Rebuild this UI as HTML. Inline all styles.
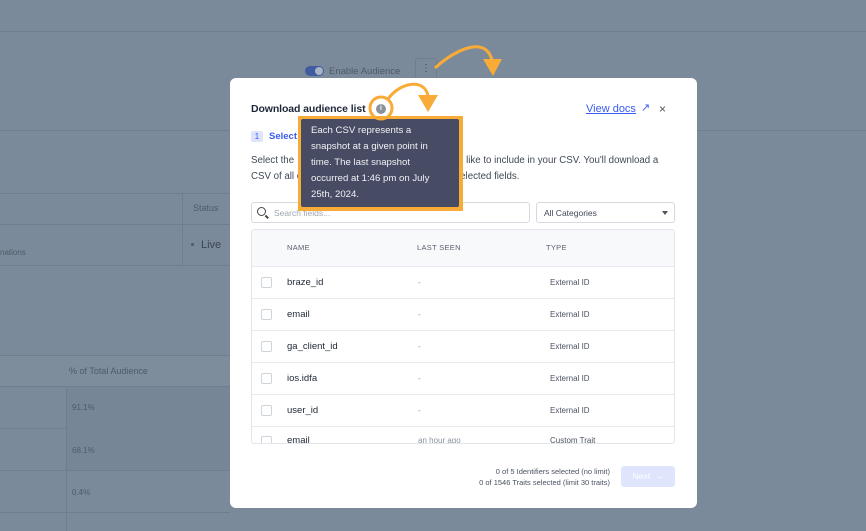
<!DOCTYPE html>
<html><head><meta charset="utf-8"><style>
*{box-sizing:border-box;margin:0;padding:0}
body{width:866px;height:531px;overflow:hidden;background:#7b8a9a;font-family:"Liberation Sans",sans-serif;position:relative}
.a{position:absolute}
.hl{position:absolute;height:1px;background:#6f7e8e}
.vl{position:absolute;width:1px;background:#6f7e8e}
.bgt{position:absolute;font-size:9px;color:#4e5a6a}
.modal{left:230px;top:78px;width:467px;height:430px;background:#fff;border-radius:6px}
.row{position:absolute;left:0;width:423px;height:32px;border-top:1px solid #e6e9ef;font-size:9.5px;color:#222b3a}
.cb{position:absolute;left:9px;top:10px;width:11px;height:11px;border:1px solid #cfd4dc;border-radius:2px}
.n{position:absolute;left:35px;top:10px}
.ls{position:absolute;left:166px;top:11px;color:#8a93a0;font-size:8px}
.ty{position:absolute;left:298px;top:11px;color:#4a5260;font-size:8px}
</style></head><body>
<div class="hl" style="left:0;top:31px;width:866px"></div>
<div class="hl" style="left:0;top:130px;width:866px"></div>
<div class="hl" style="left:0;top:193px;width:230px"></div>
<div class="hl" style="left:0;top:224px;width:230px"></div>
<div class="hl" style="left:0;top:265px;width:230px"></div>
<div class="vl" style="left:182px;top:193px;height:72px"></div>
<div class="bgt" style="left:193px;top:203px">Status</div>
<div class="a" style="left:191px;top:243px;width:3px;height:3px;border-radius:50%;background:#4e5a6a"></div>
<div class="bgt" style="left:201px;top:239px;font-size:11px;color:#3a4555">Live</div>
<div class="bgt" style="left:0;top:248px;font-size:8px">nations</div>
<div class="hl" style="left:0;top:355px;width:230px"></div>
<div class="a" style="left:0;top:356px;width:230px;height:30px;background:#7e8d9c"></div>
<div class="hl" style="left:0;top:386px;width:230px"></div>
<div class="hl" style="left:0;top:428px;width:230px"></div>
<div class="hl" style="left:0;top:470px;width:230px"></div>
<div class="hl" style="left:0;top:512px;width:230px"></div>
<div class="vl" style="left:66px;top:386px;height:145px"></div>
<div class="a" style="left:67px;top:387px;width:163px;height:83px;background:#778697"></div>
<div class="bgt" style="left:69px;top:366px">% of Total Audience</div>
<div class="bgt" style="left:72px;top:403px;font-size:8px">91.1%</div>
<div class="bgt" style="left:72px;top:446px;font-size:8px">68.1%</div>
<div class="bgt" style="left:72px;top:488px;font-size:8px">0.4%</div>
<div class="a" style="left:305px;top:66px;width:19px;height:10px;border-radius:5px;background:#3f5c9e"></div>
<div class="a" style="left:315px;top:67px;width:8px;height:8px;border-radius:50%;background:#a8b4c6"></div>
<div class="bgt" style="left:329px;top:66px;font-size:9.5px">Enable Audience</div>
<div class="a" style="left:415px;top:58px;width:22px;height:22px;border:1px solid #6f7e8e;border-radius:3px;color:#3a4555;font-size:10px;text-align:center;line-height:20px">⋮</div>

<div class="a modal">
  <div class="a" style="left:21px;top:25px;font-size:10.5px;font-weight:bold;color:#1e2638;letter-spacing:-0.1px">Download audience list</div>
  <div class="a" style="left:146px;top:26px;width:10px;height:10px;border-radius:50%;background:#8b919c;color:#fff;font-size:7px;text-align:center;line-height:10px;font-weight:bold">i</div>
  <div class="a" style="left:356px;top:25px;font-size:11px;color:#3a5bf0;text-decoration:underline">View docs</div>
  <div class="a" style="left:411px;top:23px;font-size:11px;color:#3a5bf0">↗</div>
  <div class="a" style="left:429px;top:24px;font-size:12px;color:#555">×</div>
  <div class="a" style="left:21px;top:53px;width:12px;height:11px;background:#dde4fb;border-radius:2px;font-size:8px;color:#3a5bf0;text-align:center;line-height:11px">1</div>
  <div class="a" style="left:39px;top:53px;font-size:9.5px;color:#3a5bf0;font-weight:bold">Select</div>
  <div class="a" style="left:21px;top:75px;font-size:9.7px;line-height:16px;color:#404858;white-space:nowrap">Select the <span style="display:inline-block;width:154px"></span>u'd like to include in your CSV. You'll download a<br>CSV of all e<span style="display:inline-block;width:158px"></span>elected fields.</div>
  <div class="a" style="left:21px;top:124px;width:279px;height:21px;border:1px solid #d5d9e0;border-radius:3px;background:#fff"></div>
  <div class="a" style="left:27px;top:129px;width:9px;height:9px;border:1.5px solid #444;border-radius:50%"></div>
  <div class="a" style="left:35px;top:138px;width:4px;height:1.5px;background:#444;transform:rotate(45deg)"></div>
  <div class="a" style="left:44px;top:130px;font-size:8.5px;color:#a0a7b2">Search fields...</div>
  <div class="a" style="left:306px;top:124px;width:139px;height:21px;border:1px solid #d5d9e0;border-radius:3px;font-size:8.5px;color:#404858;padding:5px 0 0 7px">All Categories</div>
  <div class="a" style="left:432px;top:133px;border:3px solid transparent;border-top:4px solid #555"></div>
  <div class="a" style="left:21px;top:151px;width:424px;height:215px;border:1px solid #e2e6ec;border-radius:3px;overflow:hidden">
    <div class="a" style="left:0;top:0;width:424px;height:36px;background:#f8f9fb"></div>
    <div class="a" style="left:35px;top:13px;font-size:7.5px;color:#5a6270;letter-spacing:.3px">NAME</div>
    <div class="a" style="left:165px;top:13px;font-size:7.5px;color:#5a6270;letter-spacing:.3px">LAST SEEN</div>
    <div class="a" style="left:294px;top:13px;font-size:7.5px;color:#5a6270;letter-spacing:.3px">TYPE</div>
    <div class="row" style="top:36px"><div class="cb"></div><div class="n">braze_id</div><div class="ls">-</div><div class="ty">External ID</div></div>
    <div class="row" style="top:68px"><div class="cb"></div><div class="n">email</div><div class="ls">-</div><div class="ty">External ID</div></div>
    <div class="row" style="top:100px"><div class="cb"></div><div class="n">ga_client_id</div><div class="ls">-</div><div class="ty">External ID</div></div>
    <div class="row" style="top:132px"><div class="cb"></div><div class="n">ios.idfa</div><div class="ls">-</div><div class="ty">External ID</div></div>
    <div class="row" style="top:164px"><div class="cb"></div><div class="n">user_id</div><div class="ls">-</div><div class="ty">External ID</div></div>
    <div class="row" style="top:196px"><div class="cb" style="top:9px"></div><div class="n" style="top:8px">email</div><div class="ls" style="top:9px">an hour ago</div><div class="ty" style="top:9px">Custom Trait</div></div>
  </div>
  <div class="a" style="left:200px;top:388px;width:180px;text-align:right;font-size:7.5px;line-height:11px;color:#4a5260">0 of 5 Identifiers selected (no limit)<br>0 of 1546 Traits selected (limit 30 traits)</div>
  <div class="a" style="left:391px;top:388px;width:54px;height:21px;background:#dfe5fd;border-radius:3px;color:#fff;font-size:8.5px;text-align:center;line-height:21px">Next &nbsp;→</div>
</div>

<div class="a" style="left:298px;top:116px;width:165px;height:95px;border:3px solid #f9ab37;background:#f9ab37"></div>
<div class="a" style="left:301px;top:119px;width:158px;height:88px;background:#474b63;border-radius:2px;padding:4px 10px 0 10px;font-size:9.6px;line-height:16px;color:#f1f2f6"><div style="width:135px">Each CSV represents a snapshot at a given point in time. The last snapshot occurred at 1:46 pm on July 25th, 2024.</div></div>
<svg class="a" style="left:0;top:0" width="866" height="531">
<circle cx="381" cy="108" r="11" fill="none" stroke="#f9ab37" stroke-width="3"/>
<path d="M388 99 C400 82,425 78,428 96" fill="none" stroke="#f9ab37" stroke-width="3"/>
<path d="M418 95 L438 95 L428 112 Z" fill="#f9ab37"/>
<path d="M435 68 C455 50,485 35,492 60" fill="none" stroke="#f9ab37" stroke-width="3"/>
<path d="M483 59 L502 59 L493 76 Z" fill="#f9ab37"/>
</svg>
</body></html>
